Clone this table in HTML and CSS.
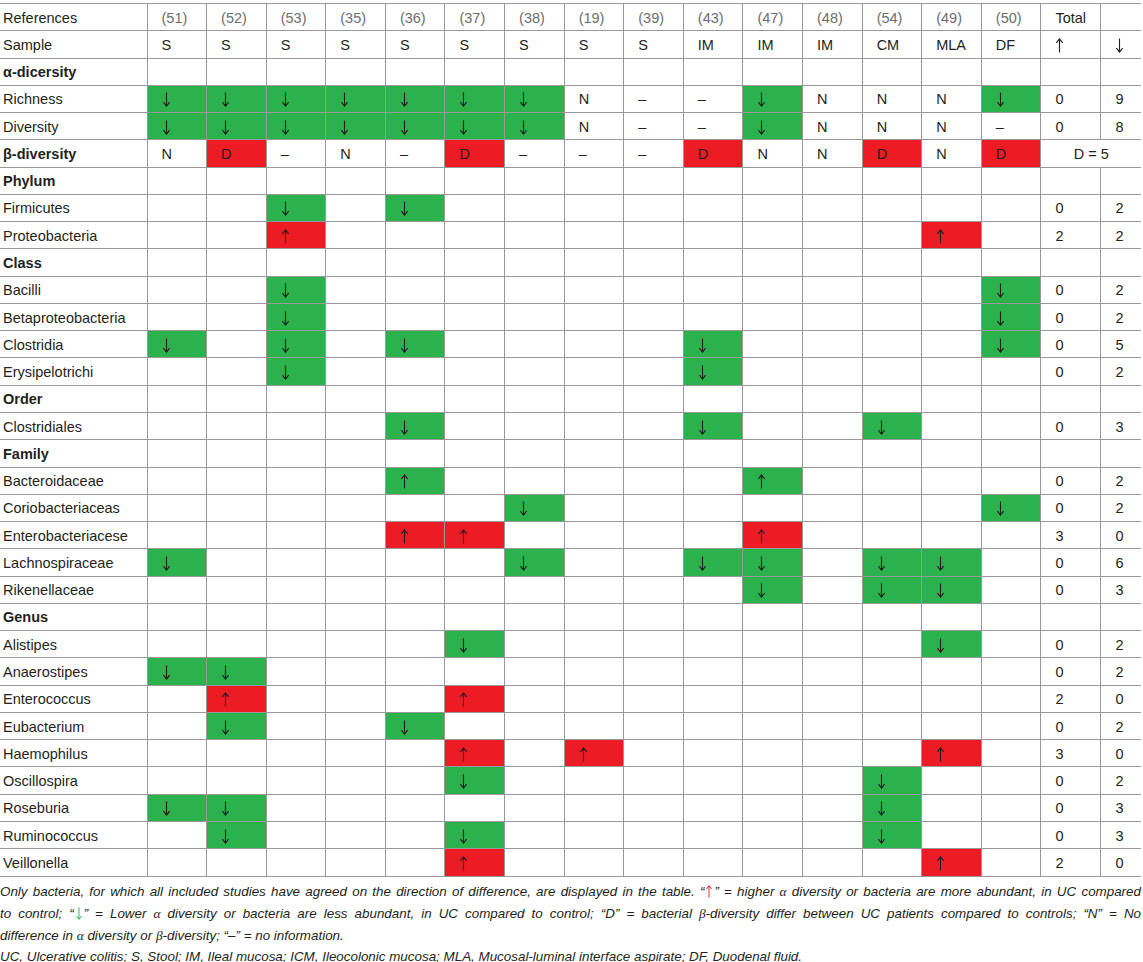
FILE: index.html
```html
<!DOCTYPE html>
<html lang="en">
<head>
    <meta charset="UTF-8">
    <meta name="viewport" content="width=device-width, initial-scale=1.0">
    <title>Microbiota in UC</title>
    <link rel="stylesheet" href="styles.css">
</head>
<body>

    <table class="grid">
        <colgroup>
            <col class="c-name">
            <col span="15" class="c-ref">
            <col class="c-up">
            <col class="c-down">
        </colgroup>
        <tbody>
            <tr class="refs">
                <td>References</td>
                <td>(51)</td><td>(52)</td><td>(53)</td><td>(35)</td><td>(36)</td><td>(37)</td><td>(38)</td><td>(19)</td>
                <td>(39)</td><td>(43)</td><td>(47)</td><td>(48)</td><td>(54)</td><td>(49)</td><td>(50)</td>
                <td class="total">Total</td><td></td>
            </tr>
            <tr>
                <td>Sample</td>
                <td>S</td><td>S</td><td>S</td><td>S</td><td>S</td><td>S</td><td>S</td><td>S</td>
                <td>S</td><td>IM</td><td>IM</td><td>IM</td><td>CM</td><td>MLA</td><td>DF</td>
                <td>↑</td><td>↓</td>
            </tr>
            <tr class="head">
                <td>α-dicersity</td>
                <td></td><td></td><td></td><td></td><td></td><td></td><td></td><td></td>
                <td></td><td></td><td></td><td></td><td></td><td></td><td></td><td></td><td></td>
            </tr>
            <tr>
                <td>Richness</td>
                <td class="g">↓</td><td class="g">↓</td><td class="g">↓</td><td class="g">↓</td><td class="g">↓</td><td class="g">↓</td><td class="g">↓</td><td>N</td>
                <td>–</td><td>–</td><td class="g">↓</td><td>N</td><td>N</td><td>N</td><td class="g">↓</td>
                <td>0</td><td>9</td>
            </tr>
            <tr>
                <td>Diversity</td>
                <td class="g">↓</td><td class="g">↓</td><td class="g">↓</td><td class="g">↓</td><td class="g">↓</td><td class="g">↓</td><td class="g">↓</td><td>N</td>
                <td>–</td><td>–</td><td class="g">↓</td><td>N</td><td>N</td><td>N</td><td>–</td>
                <td>0</td><td>8</td>
            </tr>
            <tr class="head">
                <td>β-diversity</td>
                <td>N</td><td class="r">D</td><td>–</td><td>N</td><td>–</td><td class="r">D</td><td>–</td><td>–</td>
                <td>–</td><td class="r">D</td><td>N</td><td>N</td><td class="r">D</td><td>N</td><td class="r">D</td>
                <td class="merged" colspan="2">D = 5</td>
            </tr>
        </tbody>
        <tbody id="taxa"></tbody>
    </table>

    <div class="notes">
        <p class="just">Only bacteria, for which all included studies have agreed on the direction of difference, are displayed in the table. “<span class="up">↑</span>” = higher <span class="gk">α</span> diversity or bacteria are more abundant, in UC compared</p>
        <p class="just">to control; “<span class="down">↓</span>” = Lower <span class="gk">α</span> diversity or bacteria are less abundant, in UC compared to control; “D” = bacterial <span class="gk">β</span>-diversity differ between UC patients compared to controls; “N” = No</p>
        <p>difference in <span class="gk">α</span> diversity or <span class="gk">β</span>-diversity; “–” = no information.</p>
        <p class="abbr">UC, Ulcerative colitis; S, Stool; IM, Ileal mucosa; ICM, Ileocolonic mucosa; MLA, Mucosal-luminal interface aspirate; DF, Duodenal fluid.</p>
    </div>

    <script>
        // each row: name, cells as "col:mark" (d/u = green down/up, R = red up), then totals
        let rows = [
            ["#Phylum"],
            ["Firmicutes", "2:d 4:d", 0, 2],
            ["Proteobacteria", "2:R 13:R", 2, 2],
            ["#Class"],
            ["Bacilli", "2:d 14:d", 0, 2],
            ["Betaproteobacteria", "2:d 14:d", 0, 2],
            ["Clostridia", "0:d 2:d 4:d 9:d 14:d", 0, 5],
            ["Erysipelotrichi", "2:d 9:d", 0, 2],
            ["#Order"],
            ["Clostridiales", "4:d 9:d 12:d", 0, 3],
            ["#Family"],
            ["Bacteroidaceae", "4:u 10:u", 0, 2],
            ["Coriobacteriaceas", "6:d 14:d", 0, 2],
            ["Enterobacteriacese", "4:R 5:R 10:R", 3, 0],
            ["Lachnospiraceae", "0:d 6:d 9:d 10:d 12:d 13:d", 0, 6],
            ["Rikenellaceae", "10:d 12:d 13:d", 0, 3],
            ["#Genus"],
            ["Alistipes", "5:d 13:d", 0, 2],
            ["Anaerostipes", "0:d 1:d", 0, 2],
            ["Enterococcus", "1:R 5:R", 2, 0],
            ["Eubacterium", "1:d 4:d", 0, 2],
            ["Haemophilus", "5:R 7:R 13:R", 3, 0],
            ["Oscillospira", "5:d 12:d", 0, 2],
            ["Roseburia", "0:d 1:d 12:d", 0, 3],
            ["Ruminococcus", "1:d 5:d 12:d", 0, 3],
            ["Veillonella", "5:R 13:R", 2, 0]
        ];

        let body = document.getElementById("taxa");

        rows.forEach(function(row) {
            let tr = document.createElement("tr");
            let name = row[0];
            let marks = {};
            if (name[0] === "#") {
                tr.className = "head";
                name = name.slice(1);
            } else {
                row[1].split(" ").forEach(function(m) {
                    let parts = m.split(":");
                    marks[parts[0]] = parts[1];
                });
            }

            let first = document.createElement("td");
            first.textContent = name;
            tr.appendChild(first);

            for (let i = 0; i < 15; i++) {
                let td = document.createElement("td");
                let m = marks[i];
                if (m === "d") {
                    td.className = "g";
                    td.textContent = "↓";
                } else if (m === "u") {
                    td.className = "g";
                    td.textContent = "↑";
                } else if (m === "R") {
                    td.className = "r";
                    td.textContent = "↑";
                }
                tr.appendChild(td);
            }

            let up = document.createElement("td");
            let down = document.createElement("td");
            if (row.length > 1) {
                up.textContent = row[2];
                down.textContent = row[3];
            }
            tr.appendChild(up);
            tr.appendChild(down);
            body.appendChild(tr);
        });

        // swap arrow characters for thin drawn arrows
        let downSvg = '<svg class="arrow" viewBox="0 0 9 15"><path d="M4.5 0.5V14M1.4 10.2L4.5 14.2L7.6 10.2"/></svg>';
        let upSvg = '<svg class="arrow" viewBox="0 0 9 15"><path d="M4.5 14.5V1M1.4 4.8L4.5 0.8L7.6 4.8"/></svg>';

        document.querySelectorAll(".grid td, .notes span.up, .notes span.down").forEach(function(el) {
            if (el.textContent === "↓") {
                el.innerHTML = downSvg;
            } else if (el.textContent === "↑") {
                el.innerHTML = upSvg;
            }
        });
    </script>

</body>
</html>
```

FILE: styles.css
```css
body {
    margin: 0;
    padding: 3px 0 0 0;
    font-family: "Liberation Sans", Arial, sans-serif;
    color: #231f20;
    background: #fff;
}
.grid {
    border-collapse: collapse;
    table-layout: fixed;
    width: 1141px;
    font-size: 14.5px;
}
.c-name {
    width: 147px;
}
.c-ref {
    width: 59.6px;
}
.c-up {
    width: 60px;
}
.c-down {
    width: 40px;
}
.grid td {
    height: 27.28px;
    padding: 1px 0 0 14px;
    border: 1px solid #999;
    white-space: nowrap;
    box-sizing: border-box;
    vertical-align: middle;
}
.grid tr td:first-child {
    border-left: none;
    padding-left: 3px;
}
.grid tr td:last-child {
    border-right: none;
}
.refs td {
    color: #6d6d6d;
}
.refs td:first-child,
.refs .total {
    color: #231f20;
}
.head td:first-child {
    font-weight: bold;
}
.grid td.g {
    background: #2bb24c;
}
.grid td.r {
    background: #ed1c24;
}
.grid td.merged {
    text-align: center;
    padding-left: 0;
}
.arrow {
    display: inline-block;
    width: 9px;
    height: 15px;
    vertical-align: -3px;
    fill: none;
    stroke: currentColor;
    stroke-width: 1.1;
}
.notes {
    padding: 4px 2px 0 0;
    font-size: 13.4px;
    font-style: italic;
}
.notes p {
    margin: 0;
    line-height: 22px;
    white-space: nowrap;
}
.notes p.just {
    text-align: justify;
    text-align-last: justify;
}
.notes p.abbr {
    line-height: 20px;
}
.notes .arrow {
    width: 8px;
    height: 13px;
    vertical-align: -2px;
    margin: 0 1px;
}
.up {
    color: #ed1c24;
}
.down {
    color: #2bb24c;
}
.gk {
    font-family: "Liberation Serif", serif;
}
```
